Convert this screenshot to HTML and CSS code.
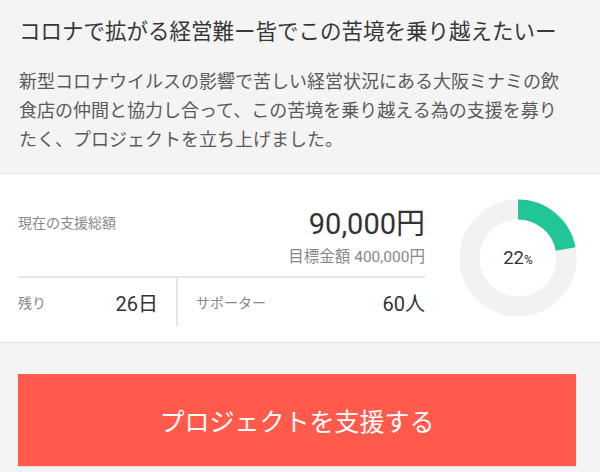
FILE: index.html
```html
<!DOCTYPE html>
<html lang="ja">
<head>
<meta charset="utf-8">
<link rel="stylesheet" href="styles.css">
</head>
<body>
<div class="page">
  <header class="intro">
    <h1 class="title">コロナで拡がる経営難ー皆でこの苦境を乗り越えたいー</h1>
    <p class="lead">新型コロナウイルスの影響で苦しい経営状況にある大阪ミナミの飲食店の仲間と協力し合って、この苦境を乗り越える為の支援を募りたく、プロジェクトを立ち上げました。</p>
  </header>
  <section class="card">
    <div class="stats">
      <div class="total">
        <span class="label">現在の支援総額</span>
        <div class="amounts">
          <div class="amount">90,000円</div>
          <div class="goal">目標金額 400,000円</div>
        </div>
      </div>
      <div class="row">
        <div class="cell cell-left">
          <span class="label">残り</span>
          <span class="value">26日</span>
        </div>
        <div class="cell cell-right">
          <span class="label">サポーター</span>
          <span class="value">60人</span>
        </div>
      </div>
    </div>
    <div class="donut">
      <svg width="118" height="118" viewBox="0 0 118 118">
        <circle cx="59" cy="59" r="48.5" fill="none" stroke="#f2f2f2" stroke-width="20"/>
        <circle cx="59" cy="59" r="48.5" fill="none" stroke="#22c597" stroke-width="20"
          stroke-dasharray="67.04 304.73" transform="rotate(-90 59 59)"/>
      </svg>
      <div class="pct">22<span class="pct-sign">%</span></div>
    </div>
  </section>
  <div class="action">
    <button class="support">プロジェクトを支援する</button>
  </div>
</div>
</body>
</html>
```
FILE: styles.css
```css
* { box-sizing: border-box; }
html, body { margin: 0; padding: 0; }
body {
  background: #f4f4f4;
  font-family: Roboto, "Noto Sans CJK JP", sans-serif;
  color: #333;
  width: 600px;
  height: 472px;
  overflow: hidden;
}
.intro {
  padding: 18px 38px 19px 19px;
}
.title {
  margin: 0;
  font-size: 21.5px;
  font-weight: 400;
  line-height: 28px;
  color: #383838;
  white-space: nowrap;
}
.lead {
  margin: 21px 0 0;
  font-size: 18px;
  line-height: 29px;
  color: #5a5a5a;
}
.card {
  background: #fff;
  border-top: 1px solid #e2e2e2;
  border-bottom: 1px solid #e2e2e2;
  display: flex;
  align-items: flex-start;
  padding: 25px 23px 16px 18px;
  gap: 34px;
}
.stats {
  flex: 1;
  padding-top: 8px;
}
.label {
  font-size: 14px;
  color: #888;
}
.total {
  display: flex;
  justify-content: space-between;
  align-items: flex-start;
  padding-bottom: 8px;
  border-bottom: 2px solid #e6e6e6;
}
.total .label { margin-top: 5px; }
.amounts { text-align: right; }
.amount {
  font-size: 29px;
  line-height: 34px;
  color: #333;
}
.goal {
  font-size: 15.5px;
  line-height: 22px;
  color: #888;
  margin-top: 5px;
}
.row {
  display: flex;
}
.cell {
  display: flex;
  justify-content: space-between;
  align-items: center;
  height: 48px;
}
.cell-left {
  width: 160px;
  padding-right: 18px;
  border-right: 2px solid #e6e6e6;
}
.cell-right {
  flex: 1;
  padding-left: 18px;
}
.value {
  font-size: 20px;
  color: #333;
}
.donut {
  position: relative;
  width: 118px;
  height: 118px;
}
.donut svg { display: block; }
.pct {
  position: absolute;
  inset: 0;
  display: flex;
  align-items: center;
  justify-content: center;
  font-size: 18.5px;
  color: #333;
}
.pct-sign { font-size: 12px; margin-top: 3px; }
.action {
  padding: 31px 24px 0 18px;
}
.support {
  display: block;
  width: 100%;
  height: 92px;
  border: none;
  background: #ff5a4c;
  color: #fff;
  font-family: "Noto Sans CJK JP", sans-serif;
  font-size: 25px;
  box-shadow: 0 1px 1px rgba(0,0,0,0.08);
}
```
